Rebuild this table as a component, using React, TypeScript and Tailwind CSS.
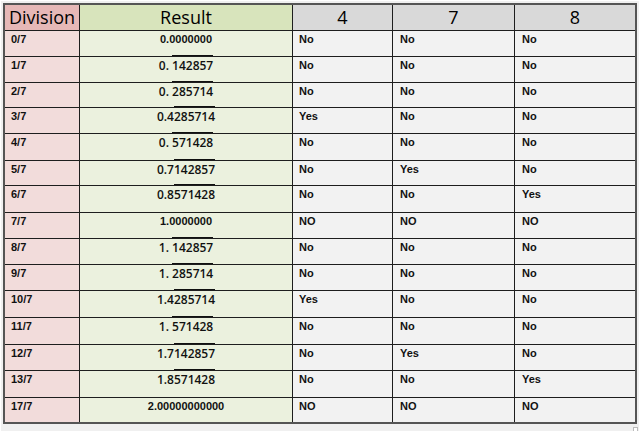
const rows: { div: string; lead: string; rep?: string; bold?: boolean; a: string; b: string; c: string }[] = [
  { div: '0/7', lead: '0.0000000', bold: true, a: 'No', b: 'No', c: 'No' },
  { div: '1/7', lead: '0. ', rep: '142857', a: 'No', b: 'No', c: 'No' },
  { div: '2/7', lead: '0. ', rep: '285714', a: 'No', b: 'No', c: 'No' },
  { div: '3/7', lead: '0.4', rep: '285714', a: 'Yes', b: 'No', c: 'No' },
  { div: '4/7', lead: '0. ', rep: '571428', a: 'No', b: 'No', c: 'No' },
  { div: '5/7', lead: '0.7', rep: '142857', a: 'No', b: 'Yes', c: 'No' },
  { div: '6/7', lead: '0.8', rep: '571428', a: 'No', b: 'No', c: 'Yes' },
  { div: '7/7', lead: '1.0000000', bold: true, a: 'NO', b: 'NO', c: 'NO' },
  { div: '8/7', lead: '1. ', rep: '142857', a: 'No', b: 'No', c: 'No' },
  { div: '9/7', lead: '1. ', rep: '285714', a: 'No', b: 'No', c: 'No' },
  { div: '10/7', lead: '1.4', rep: '285714', a: 'Yes', b: 'No', c: 'No' },
  { div: '11/7', lead: '1. ', rep: '571428', a: 'No', b: 'No', c: 'No' },
  { div: '12/7', lead: '1.7', rep: '142857', a: 'No', b: 'Yes', c: 'No' },
  { div: '13/7', lead: '1.8', rep: '571428', a: 'No', b: 'No', c: 'Yes' },
  { div: '17/7', lead: '2.00000000000', bold: true, a: 'NO', b: 'NO', c: 'NO' },
];

const head = 'flex items-center justify-center border-b border-r border-[#1e1e1e] text-[18px] font-medium text-black';
const cell = 'border-r border-[#1e1e1e] pl-[6px] pt-[2px] text-[11px] font-bold leading-[13px] text-[#111]';
const openSans = { fontFamily: '"Open Sans", sans-serif' };

export default function App() {
  return (
    <div
      className="h-[432px] w-[640px] overflow-hidden border border-white bg-[#f0f0f0] pl-[2px] pt-[2px]"
      style={{ fontFamily: '"Liberation Sans", Arial, sans-serif' }}
    >
      <div className="grid w-[634px] border-2 border-[#555] grid-cols-[75px_213px_100px_122px_120px] grid-rows-[26px_26px_26px_25px_26px_27px_25px_27px_26px_26px_26px_27px_27px_26px_27px_24px]">
        <div className={`${head} bg-[#e6b8b7]`} style={openSans}>
          Division
        </div>
        <div className={`${head} bg-[#d8e4bc]`} style={openSans}>
          Result
        </div>
        <div className={`${head} bg-[#d9d9d9]`} style={openSans}>
          4
        </div>
        <div className={`${head} bg-[#d9d9d9]`} style={openSans}>
          7
        </div>
        <div className={`${head} border-r-0 bg-[#d9d9d9]`} style={openSans}>
          8
        </div>

        {rows.map((r, i) => {
          const last = i === rows.length - 1;
          const bb = last ? '' : 'border-b';
          return (
            <div key={r.div} className="contents">
              <div className={`${cell} ${bb} bg-[#f2dcdb] pl-[5px]`}>{r.div}</div>
              <div className={`border-r border-[#1e1e1e] ${bb} bg-[#ebf1de] text-center text-[#111]`}>
                {r.bold ? (
                  <div className="pt-[2px] text-[11px] font-bold leading-[13px]">{r.lead}</div>
                ) : (
                  <div className="pt-[2px] text-[12px] font-semibold leading-[14px] whitespace-pre" style={openSans}>
                    {r.lead}
                    <span className="relative">
                      <span className="absolute -top-[2px] left-0 right-0 h-px bg-[#111]" />
                      {r.rep}
                    </span>
                  </div>
                )}
              </div>
              <div className={`${cell} ${bb} bg-[#f2f2f2]`}>{r.a}</div>
              <div className={`${cell} ${bb} bg-[#f2f2f2] pl-[7px]`}>{r.b}</div>
              <div className={`${cell} ${bb} border-r-0 bg-[#f2f2f2] pl-[7px]`}>{r.c}</div>
            </div>
          );
        })}
      </div>
      <div className="flex justify-end pr-[1px] pt-[3px]">
        <div className="h-[5px] w-[5px] border border-[#bbb] bg-white" />
      </div>
    </div>
  );
}
